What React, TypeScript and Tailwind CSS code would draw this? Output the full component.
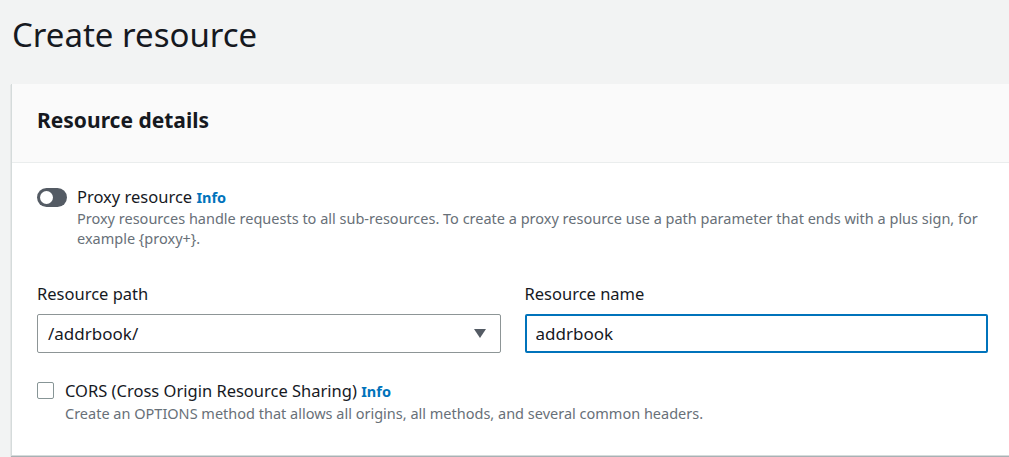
import { useState } from "react";

const proxyHelp =
  "Proxy resources handle requests to all sub-resources. To create a proxy resource use a path parameter that ends with a plus sign, for example {proxy+}.";

export default function App() {
  const [proxy, setProxy] = useState(false);
  const [cors, setCors] = useState(false);
  const [name, setName] = useState("addrbook");

  return (
    <div className="h-[457px] w-[1009px] overflow-hidden bg-[#f2f3f3] font-['Noto_Sans',sans-serif] text-[#16191f]">
      <h1 className="pl-[12px] pt-[10px] text-[33px] font-normal leading-[50px]">Create resource</h1>

      <div className="ml-[11px] mt-[24px] w-[1020px] border-b border-l border-[#d5dbdb] bg-white shadow-[0_1px_1px_0_rgba(0,28,36,0.3)]">
        <div className="flex h-[79px] items-center border-b border-[#eaeded] bg-[#fafafa] pb-[4px] pl-[25px]">
          <h2 className="text-[21px] font-bold">Resource details</h2>
        </div>

        <div className="pl-[25px] pt-[23px] pb-[32px]">
          <div className="flex gap-[10px]">
            <button
              onClick={() => setProxy(!proxy)}
              className={`mt-[2px] flex h-[19px] w-[30px] items-center rounded-full px-[3px] ${proxy ? "justify-end bg-[#0073bb]" : "justify-start bg-[#545b64]"}`}
            >
              <span className="h-[13px] w-[13px] rounded-full bg-white" />
            </button>
            <div>
              <div className="text-[16.5px] leading-[22px]">
                Proxy resource <span className="text-[14.5px] font-bold text-[#0073bb]">Info</span>
              </div>
              <p className="w-[910px] text-[14.5px] leading-[20px] text-[#687078]">{proxyHelp}</p>
            </div>
          </div>

          <div className="mt-[35px] grid w-[951px] grid-cols-2 gap-[24px]">
            <div>
              <label className="block text-[16.5px] leading-[22px]">Resource path</label>
              <div className="mt-[9px] flex h-[39px] items-center justify-between rounded-[2px] border border-[#8d9596] bg-white pl-[10px] pr-[14px]">
                <span className="text-[17px]">/addrbook/</span>
                <svg width="12" height="9" viewBox="0 0 12 9">
                  <path d="M0 0H12L6 9Z" fill="#545b64" />
                </svg>
              </div>
            </div>
            <div>
              <label className="block text-[16.5px] leading-[22px]">Resource name</label>
              <input
                value={name}
                onChange={(e) => setName(e.target.value)}
                className="mt-[9px] h-[39px] w-full rounded-[2px] border-2 border-[#0073bb] bg-white pl-[9px] text-[17px] text-[#16191f] outline-none"
              />
            </div>
          </div>

          <div className="mt-[27px] flex gap-[11px]">
            <button
              onClick={() => setCors(!cors)}
              className={`mt-[2px] h-[17px] w-[17px] shrink-0 rounded-[2px] border border-[#879596] ${cors ? "bg-[#0073bb]" : "bg-white"}`}
            />
            <div>
              <div className="text-[16.5px] leading-[22px]">
                CORS (Cross Origin Resource Sharing) <span className="text-[14.5px] font-bold text-[#0073bb]">Info</span>
              </div>
              <p className="mt-[1px] text-[14.5px] leading-[20px] text-[#687078]">
                Create an OPTIONS method that allows all origins, all methods, and several common headers.
              </p>
            </div>
          </div>
        </div>
      </div>
    </div>
  );
}
